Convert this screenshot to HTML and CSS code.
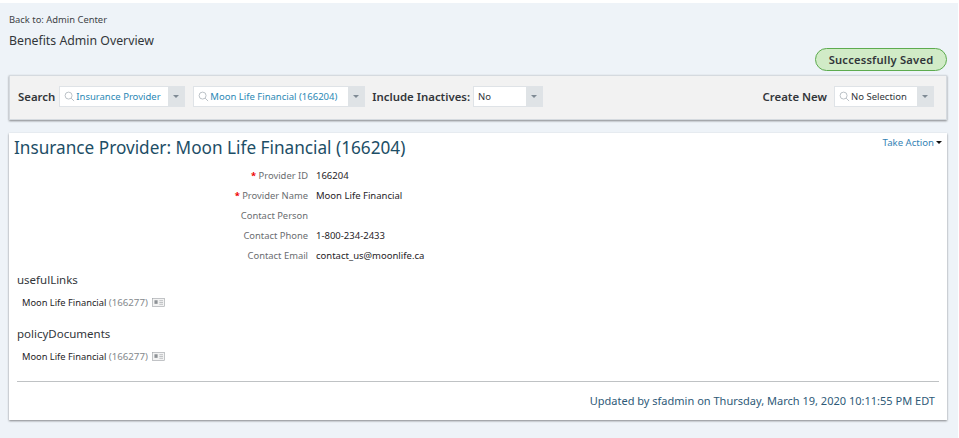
FILE: index.html
```html
<!DOCTYPE html>
<html lang="en">
<head>
<meta charset="utf-8">
<title>Benefits Admin Overview</title>
<link rel="stylesheet" href="styles.css">
</head>
<body>
<div class="page">
  <a class="back">Back to: Admin Center</a>
  <h1 class="page-title">Benefits Admin Overview</h1>
  <div class="status-row"><span class="badge">Successfully Saved</span></div>

  <div class="search-bar">
    <span class="bar-label">Search</span>
    <div class="combo combo-type">
      <svg class="lens" viewBox="0 0 12 12"><circle cx="5" cy="5" r="3.8"/><path d="M7.8 7.8 11 11"/></svg>
      <span class="combo-text link">Insurance Provider</span>
      <span class="combo-btn"><i class="caret"></i></span>
    </div>
    <div class="combo combo-provider">
      <svg class="lens" viewBox="0 0 12 12"><circle cx="5" cy="5" r="3.8"/><path d="M7.8 7.8 11 11"/></svg>
      <span class="combo-text link">Moon Life Financial (166204)</span>
      <span class="combo-btn"><i class="caret"></i></span>
    </div>
    <span class="bar-label">Include Inactives:</span>
    <div class="combo combo-inactive">
      <span class="combo-text plain">No</span>
      <span class="combo-btn"><i class="caret"></i></span>
    </div>
    <span class="bar-label push">Create New</span>
    <div class="combo combo-create">
      <svg class="lens" viewBox="0 0 12 12"><circle cx="5" cy="5" r="3.8"/><path d="M7.8 7.8 11 11"/></svg>
      <span class="combo-text">No Selection</span>
      <span class="combo-btn"><i class="caret"></i></span>
    </div>
  </div>

  <section class="card">
    <div class="card-head">
      <h2 class="card-title">Insurance Provider: Moon Life Financial (166204)</h2>
      <a class="take-action">Take Action<i class="action-caret"></i></a>
    </div>
    <dl class="fields">
      <dt><span class="req">*</span> Provider ID</dt><dd>166204</dd>
      <dt><span class="req">*</span> Provider Name</dt><dd>Moon Life Financial</dd>
      <dt>Contact Person</dt><dd></dd>
      <dt>Contact Phone</dt><dd>1-800-234-2433</dd>
      <dt>Contact Email</dt><dd>contact_us@moonlife.ca</dd>
    </dl>
    <h3 class="sub">usefulLinks</h3>
    <div class="item">Moon Life Financial <span class="code">(166277)</span>
      <svg class="card-icon" viewBox="0 0 14 10"><rect x=".5" y=".5" width="13" height="9"/><rect class="fill" x="2.5" y="2.5" width="3.5" height="4"/><path d="M8 3h4M8 5h4M8 7h4"/></svg>
    </div>
    <h3 class="sub sub-second">policyDocuments</h3>
    <div class="item">Moon Life Financial <span class="code">(166277)</span>
      <svg class="card-icon" viewBox="0 0 14 10"><rect x=".5" y=".5" width="13" height="9"/><rect class="fill" x="2.5" y="2.5" width="3.5" height="4"/><path d="M8 3h4M8 5h4M8 7h4"/></svg>
    </div>
    <div class="updated">Updated by sfadmin on Thursday, March 19, 2020 10:11:55 PM EDT</div>
  </section>
</div>
</body>
</html>
```
FILE: styles.css
```css
* { box-sizing: border-box; }
html, body { margin: 0; height: 100%; background: #fff; }
body {
  font-family: "Noto Sans", "Open Sans", sans-serif;
  color: #32363a;
  overflow: hidden;
}
.page {
  margin: 3px 1px 0 0;
  height: 435px;
  padding: 10px 11px 0 9px;
  background: #eef3f8;
}
.back { display: block; font-size: 9.4px; line-height: 14px; color: #3f4347; }
.page-title { margin: 7px 0 0; font-size: 12.3px; line-height: 14px; font-weight: 400; color: #32363a; }
.status-row { display: flex; justify-content: flex-end; height: 23px; }
.badge {
  width: 132px; height: 23px;
  display: flex; align-items: center; justify-content: center;
  background: #d1ebc7; border: 1px solid #5dab4f; border-radius: 12px;
  font-size: 11.2px; font-weight: 600; color: #32363a; letter-spacing: .2px;
}
.search-bar {
  margin-top: 4px;
  height: 45px;
  display: flex; align-items: center;
  padding: 0 12px 2px 8px;
  background: #f2f2f2;
  border: 1px solid #d5dadf;
  box-shadow: 0 1px 2px rgba(0,0,0,.45);
}
.bar-label { font-size: 11.4px; font-weight: 600; color: #32363a; white-space: nowrap; }
.push { margin-left: auto; }
.combo {
  height: 21px; display: flex; align-items: center;
  background: #fff; border: 1px solid #dfe3e7; margin-left: 4px;
}
.combo-type { width: 126px; }
.combo-provider { width: 172px; margin-left: 8px; }
.bar-label + .combo-inactive { margin-left: 3px; }
.combo-provider + .bar-label { margin-left: 7px; }
.combo-inactive { width: 70px; padding-left: 4px; }
.combo-create { width: 100px; margin-left: 7px; }
.lens { width: 11px; height: 11px; margin-left: 4px; flex: none; fill: none; stroke: #b6bcc2; stroke-width: 1; }
.combo-text { margin-left: 1px; flex: 1; font-size: 9.5px; white-space: nowrap; color: #32363a; }
.combo-text.plain { margin-left: 0; }
.link { color: #2b88b5; }
.combo-btn {
  width: 16px; align-self: stretch; flex: none;
  display: flex; align-items: center; justify-content: center;
  background: #dfe3e6;
}
.caret { width: 0; height: 0; border: 3px solid transparent; border-top: 3px solid #7f8a94; border-bottom: 0; }
.card {
  margin-top: 13px;
  height: 287px;
  padding: 0 8px 0 5px;
  background: #fff;
  box-shadow: 0 1px 2px rgba(0,0,0,.45);
}
.card-head { display: flex; justify-content: space-between; align-items: flex-start; }
.card-title { margin: 3px 0 0; font-size: 17.2px; line-height: 24px; font-weight: 400; color: #1d4e66; }
.take-action { margin: 3px -3px 0 0; font-size: 9.6px; line-height: 14px; color: #3583b5; }
.action-caret { display: inline-block; margin-left: 2px; vertical-align: 2px; width: 0; height: 0; border: 3px solid transparent; border-top: 3px solid #111; border-bottom: 0; }
.fields {
  margin: 5px 0 0;
  display: grid;
  grid-template-columns: 294px 1fr;
  column-gap: 8px;
  grid-auto-rows: 20px;
  align-items: center;
  font-size: 9.5px;
}
.fields dt { text-align: right; color: #6a6d70; font-size: 9.4px; }
.fields dd { margin: 0; color: #1f2327; }
.req { color: #e00; font-weight: 700; }
.sub { margin: 6px 0 0 3px; font-size: 11.5px; line-height: 18px; font-weight: 400; color: #32363a; }
.sub-second { margin-top: 12px; }
.item { margin: 4px 0 0 8px; font-size: 9.3px; line-height: 20px; height: 20px; display: block; color: #1f2327; }
.code { color: #85898d; font-size: 9.7px; }
.card-icon { width: 13px; height: 9px; vertical-align: -1px; margin-left: 2px; fill: #f3f3f3; stroke: #a0a4a8; stroke-width: .7; }
.card-icon .fill { fill: #8e9296; stroke: none; }
.updated {
  margin: 14px 0 0 3px;
  padding: 11px 4px 0 0;
  border-top: 1px solid #bfc2c4;
  text-align: right;
  font-size: 11.03px; line-height: 16px;
  color: #2e5a78;
}
```
